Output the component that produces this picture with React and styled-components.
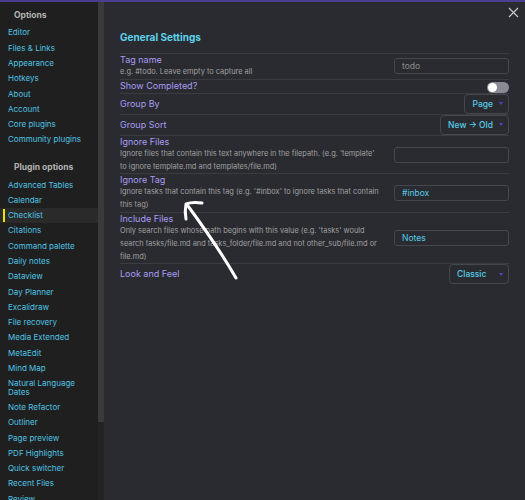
import React from 'react';
import styled, { createGlobalStyle } from 'styled-components';

const GlobalStyle = createGlobalStyle`
  html, body {
    margin: 0;
    padding: 0;
    background: #2a2b30;
    overflow: hidden;
  }
  * { box-sizing: border-box; }
`;

const coreItems = ['Editor', 'Files & Links', 'Appearance', 'Hotkeys', 'About', 'Account', 'Core plugins', 'Community plugins'];
const pluginItems = [
  'Advanced Tables', 'Calendar', 'Checklist', 'Citations', 'Command palette', 'Daily notes', 'Dataview',
  'Day Planner', 'Excalidraw', 'File recovery', 'Media Extended', 'MetaEdit', 'Mind Map',
  'Natural Language Dates', 'Note Refactor', 'Outliner', 'Page preview', 'PDF Highlights',
  'Quick switcher', 'Recent Files', 'Review',
];

const App = () => {
  return (
    <>
      <GlobalStyle />
      <Frame>
        <Sidebar>
          <NavList>
            <NavHeader>Options</NavHeader>
            {coreItems.map(item => (
              <NavItem key={item}>{item}</NavItem>
            ))}
            <NavHeader $gap>Plugin options</NavHeader>
            {pluginItems.map(item => (
              <NavItem key={item} $active={item === 'Checklist'}>{item}</NavItem>
            ))}
          </NavList>
          <ScrollTrack>
            <ScrollThumb />
          </ScrollTrack>
        </Sidebar>
        <Panel>
          <CloseRow>
            <CloseButton aria-label="Close">
              <svg width="11" height="11" viewBox="0 0 11 11">
                <path d="M1 1 L10 10 M10 1 L1 10" stroke="#c8c8c8" strokeWidth="1.2" fill="none" />
              </svg>
            </CloseButton>
          </CloseRow>
          <Heading>General Settings</Heading>
          <Settings>
            <Item>
              <Info>
                <Name>Tag name</Name>
                <Desc>e.g. #todo. Leave empty to capture all</Desc>
              </Info>
              <TextInput placeholder="todo" readOnly />
            </Item>
            <Item>
              <Info>
                <Name>Show Completed?</Name>
              </Info>
              <Toggle>
                <Knob />
              </Toggle>
            </Item>
            <Item>
              <Info>
                <Name>Group By</Name>
              </Info>
              <Select>
                Page <Caret />
              </Select>
            </Item>
            <Item>
              <Info>
                <Name>Group Sort</Name>
              </Info>
              <Select>
                New → Old <Caret />
              </Select>
            </Item>
            <Item>
              <Info>
                <Name>Ignore Files</Name>
                <Desc>Ignore files that contain this text anywhere in the filepath. (e.g. 'template' to ignore template.md and templates/file.md)</Desc>
              </Info>
              <TextInput readOnly />
            </Item>
            <Item>
              <Info>
                <Name>Ignore Tag</Name>
                <Desc>Ignore tasks that contain this tag (e.g. '#inbox' to ignore tasks that contain this tag)</Desc>
              </Info>
              <TextInput value="#inbox" readOnly />
            </Item>
            <Item>
              <Info>
                <Name>Include Files</Name>
                <Desc>Only search files whose path begins with this value (e.g. 'tasks' would search tasks/file.md and tasks_folder/file.md and not other_sub/file.md or file.md)</Desc>
              </Info>
              <TextInput value="Notes" readOnly />
            </Item>
            <Item>
              <Info>
                <Name>Look and Feel</Name>
              </Info>
              <Select $wide>
                Classic <Caret />
              </Select>
            </Item>
          </Settings>
          <Arrow width="70" height="100" viewBox="0 0 70 100">
            <path d="M66 94 C55 75 35 45 18 22" stroke="#ffffff" strokeWidth="3" fill="none" strokeLinecap="round" />
            <path d="M32 19 C26 18 21 18 16 20 C15 25 15 30 16 35" stroke="#ffffff" strokeWidth="3" fill="none" strokeLinecap="round" strokeLinejoin="round" />
          </Arrow>
        </Panel>
      </Frame>
    </>
  );
};

export default App;

const Frame = styled.div`
  display: flex;
  width: 525px;
  height: 500px;
  border-top: 2px solid #4a3d8f;
  font-family: Inter, 'Noto Sans', sans-serif;
  overflow: hidden;
`;

const Sidebar = styled.div`
  display: flex;
  width: 104px;
  flex: none;
  background: #1f1f1f;
`;

const NavList = styled.div`
  display: flex;
  flex-direction: column;
  flex: 1;
  padding-top: 7px;
  overflow: hidden;
`;

const NavHeader = styled.div`
  padding: 0 0 0 14px;
  margin: ${props => (props.$gap ? '14px 0 4px' : '0 0 4px')};
  font-size: 8.5px;
  font-weight: 700;
  line-height: 12px;
  color: #b3b3b3;
`;

const NavItem = styled.div`
  position: relative;
  flex: none;
  padding: 3.4px 2px 3.4px 8px;
  font-size: 8px;
  line-height: 8.5px;
  color: #4fc3e3;
  background: ${props => (props.$active ? '#2a2a2a' : 'transparent')};

  &::before {
    content: '';
    display: ${props => (props.$active ? 'block' : 'none')};
    position: absolute;
    left: 3px;
    top: 1.5px;
    bottom: 1.5px;
    width: 1.5px;
    background: #e6e600;
  }
`;

const ScrollTrack = styled.div`
  width: 6px;
  flex: none;
  background: #232323;
`;

const ScrollThumb = styled.div`
  height: 420px;
  background: #3a3a3a;
`;

const Panel = styled.div`
  position: relative;
  flex: 1;
  padding: 0 16px;
  background: #2a2b30;
`;

const CloseRow = styled.div`
  display: flex;
  justify-content: flex-end;
  height: 28px;
  padding-top: 5px;
  margin-right: -10px;
`;

const CloseButton = styled.div`
  display: flex;
  width: 11px;
  height: 11px;
`;

const Heading = styled.div`
  margin: 0 0 9px;
  font-size: 10px;
  font-weight: 700;
  line-height: 14px;
  color: #5dd3ee;
`;

const Settings = styled.div`
  display: flex;
  flex-direction: column;
`;

const Item = styled.div`
  display: flex;
  align-items: center;
  gap: 14px;
  border-top: 1px solid #3b3c41;
`;

const Info = styled.div`
  flex: 1;
  min-width: 0;
`;

const Name = styled.div`
  font-size: 9px;
  line-height: 12px;
  color: #a99cf3;
`;

const Desc = styled.div`
  font-size: 7.4px;
  line-height: 12.8px;
  color: #a0a0a0;
`;

const TextInput = styled.input`
  flex: none;
  width: 115px;
  height: 16px;
  padding: 0 7px;
  border: 1px solid #46474c;
  border-radius: 3px;
  background: #2a2b30;
  font-family: Inter, 'Noto Sans', sans-serif;
  font-size: 8.5px;
  color: #56cbe8;
  outline: none;

  &::placeholder {
    color: #8c8c8c;
  }
`;

const Toggle = styled.div`
  display: flex;
  align-items: center;
  flex: none;
  width: 22px;
  height: 11px;
  margin: 2px 0 0;
  padding: 0 1px;
  border-radius: 6px;
  background: #8a8b92;
`;

const Knob = styled.div`
  width: 9px;
  height: 9px;
  border-radius: 50%;
  background: #ffffff;
`;

const Select = styled.div`
  display: flex;
  align-items: center;
  gap: 6px;
  flex: none;
  height: 20px;
  padding: 0 5px 0 7px;
  ${props => (props.$wide ? 'min-width: 60px; justify-content: space-between;' : '')}
  border: 1px solid #46474c;
  border-radius: 4px;
  font-size: 8.5px;
  font-weight: 500;
  color: #56cbe8;
`;

const Caret = styled.span`
  width: 0;
  height: 0;
  border-left: 2.5px solid transparent;
  border-right: 2.5px solid transparent;
  border-top: 3px solid #5a3fc4;
`;

const Arrow = styled.svg`
  position: absolute;
  left: 66px;
  top: 182px;
`;
